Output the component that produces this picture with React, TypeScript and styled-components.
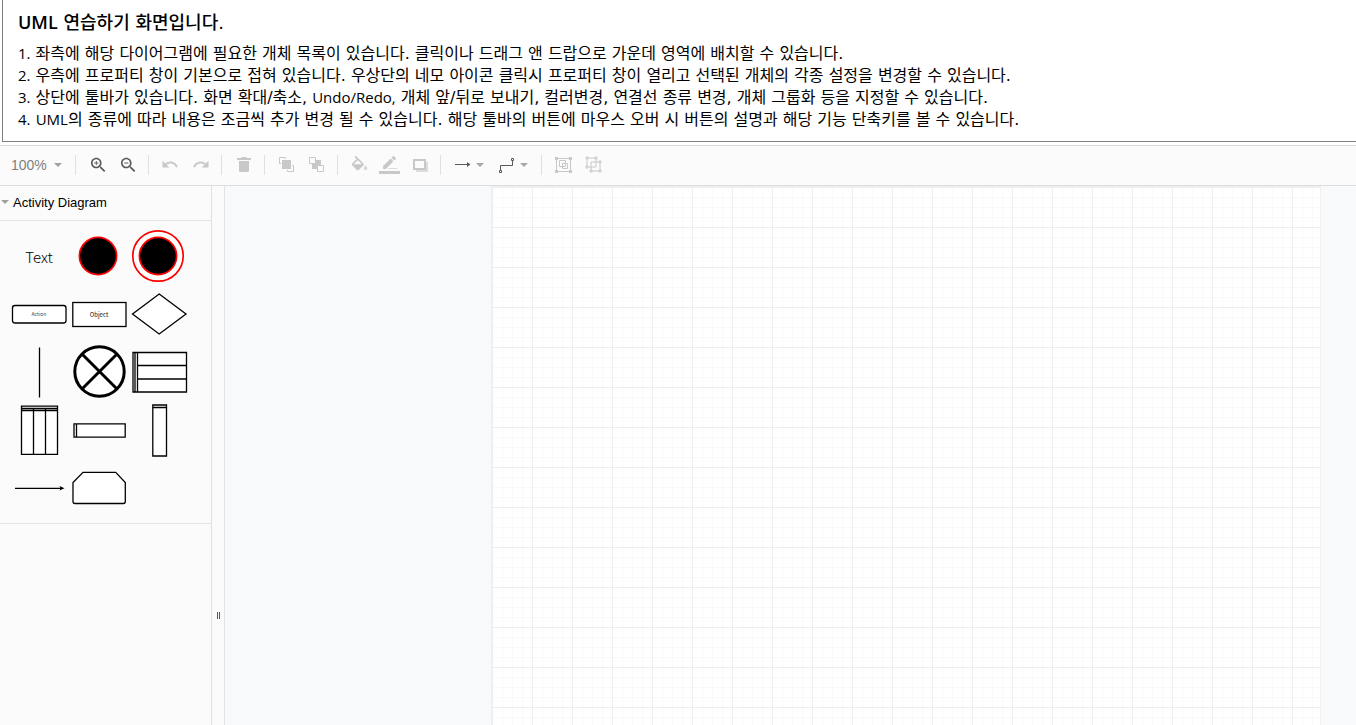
import React from "react";
import styled, { createGlobalStyle } from "styled-components";

const GlobalStyle = createGlobalStyle`
  *, *::before, *::after { box-sizing: border-box; }
  body {
    margin: 0;
    background: #ffffff;
    color: #000000;
    font-family: "DejaVu Sans", "Noto Sans CJK KR", sans-serif;
  }
`;

const Screen = styled.div`
  display: flex;
  flex-direction: column;
  min-height: 100vh;
`;

const Guide = styled.header`
  margin: 0 0 3px 2px;
  padding: 9px 15px 10px;
  border: solid #808080;
  border-width: 0 0 1px 1px;
`;

const GuideTitle = styled.h1`
  margin: 0 0 6px;
  font-size: 18px;
  line-height: 28px;
  font-weight: 500;
`;

const GuideLine = styled.p`
  margin: 0;
  font-size: 16px;
  line-height: 22px;
  font-weight: 400;
`;

const Latin = styled.span<{ $bold?: boolean }>`
  font-family: "Open Sans", sans-serif;
  font-size: ${(p) => (p.$bold ? 18 : 15)}px;
  line-height: 1;
  font-weight: ${(p) => (p.$bold ? 600 : 400)};
`;

const Toolbar = styled.div`
  display: flex;
  align-items: center;
  height: 41px;
  padding-bottom: 1px;
  background: #fbfbfb;
  border: solid #dadce0;
  border-width: 1px 0;
  font-family: "Liberation Sans", Arial, sans-serif;
`;

const ToolGroup = styled.div`
  display: flex;
  align-items: center;
  height: 20px;
  padding: 0 5px 0 7px;
  border-left: 1px solid #e0e0e0;
`;

const ToolButton = styled.button<{ $wide?: boolean; $active?: boolean }>`
  width: ${(p) => (p.$wide ? 44 : 30)}px;
  height: 30px;
  padding: 0;
  border: 0;
  background: none;
  color: ${(p) => (p.$active ? "#5a5a5a" : "#c8c8c8")};

  svg {
    display: block;
  }
`;

const ZoomButton = styled.button`
  display: flex;
  align-items: center;
  gap: 7px;
  width: 75px;
  height: 30px;
  padding: 0 0 0 11px;
  border: 0;
  background: none;
  color: #808080;
  font-family: inherit;
  font-size: 14px;
`;

const Workspace = styled.div`
  display: flex;
  flex: 1;
`;

const Sidebar = styled.aside`
  width: 212px;
  background: #fbfbfb;
  border-right: 1px solid #e0e0e0;
`;

const SectionTitle = styled.button`
  display: flex;
  align-items: center;
  gap: 4px;
  width: 100%;
  height: 35px;
  padding: 0 0 2px 1px;
  border: 0;
  border-bottom: 1px solid #e5e5e5;
  background: none;
  color: #000000;
  font-family: "Liberation Sans", Arial, sans-serif;
  font-size: 13px;
`;

const Palette = styled.div`
  display: grid;
  grid-template-columns: repeat(3, 60px);
  grid-auto-rows: 58px;
  padding: 7px 9px 5px;
  border-bottom: 1px solid #e5e5e5;
`;

const PaletteItem = styled.button`
  padding: 0 0 2px;
  border: 0;
  background: none;
  color: #000000;
  font-family: "Noto Sans CJK KR", sans-serif;
  font-size: 15px;
  font-weight: 300;

  svg {
    display: block;
    margin-bottom: -2px;
    font-weight: 400;
  }
`;

const Splitter = styled.div`
  display: flex;
  flex-direction: column;
  align-items: center;
  width: 13px;
  background: #fbfbfb;
  border-right: 1px solid #e0e3e6;

  &::before {
    content: "";
    flex: 4;
  }

  &::after {
    content: "";
    flex: 1;
  }
`;

const SplitterGrip = styled.span`
  width: 3px;
  height: 7px;
  border: solid #555555;
  border-width: 0 1px;
`;

const CanvasArea = styled.main`
  display: flex;
  flex: 1;
  justify-content: flex-end;
  padding-right: 35px;
  background: #f8f9fb;
`;

const Sheet = styled.div`
  width: 830px;
  border: solid #f0f0f0;
  border-width: 1px 1px 0;
  background-color: #ffffff;
  background-image:
    linear-gradient(to right, #eeeeee 1px, transparent 1px),
    linear-gradient(to bottom, #eeeeee 1px, transparent 1px),
    linear-gradient(to right, #f9f9f9 1px, transparent 1px),
    linear-gradient(to bottom, #f9f9f9 1px, transparent 1px);
  background-size: 40px 40px, 40px 40px, 10px 10px, 10px 10px;
`;

const guideLines: React.ReactNode[] = [
  <><Latin>1.</Latin> 좌측에 해당 다이어그램에 필요한 개체 목록이 있습니다. 클릭이나 드래그 앤 드랍으로 가운데 영역에 배치할 수 있습니다.</>,
  <><Latin>2.</Latin> 우측에 프로퍼티 창이 기본으로 접혀 있습니다. 우상단의 네모 아이콘 클릭시 프로퍼티 창이 열리고 선택된 개체의 각종 설정을 변경할 수 있습니다.</>,
  <><Latin>3.</Latin> 상단에 툴바가 있습니다. 화면 확대/축소, <Latin>Undo/Redo,</Latin> 개체 앞/뒤로 보내기, 컬러변경, 연결선 종류 변경, 개체 그룹화 등을 지정할 수 있습니다.</>,
  <><Latin>4.</Latin> <Latin>UML</Latin>의 종류에 따라 내용은 조금씩 추가 변경 될 수 있습니다. 해당 툴바의 버튼에 마우스 오버 시 버튼의 설명과 해당 기능 단축키를 볼 수 있습니다.</>,
];

type Tool = { label: string; art: React.ReactNode; active?: boolean; wide?: boolean };

const lens =
  "M15.5 14h-.79l-.28-.27C15.41 12.59 16 11.11 16 9.5 16 5.91 13.09 3 9.5 3S3 5.91 3 9.5 5.91 16 9.5 16c1.61 0 3.09-.59 4.23-1.57l.27.28v.79l5 4.99L20.49 19l-4.99-5zm-6 0C7.01 14 5 11.99 5 9.5S7.01 5 9.5 5 14 7.01 14 9.5 11.99 14 9.5 14z";
const curl =
  "M12.5 8c-2.65 0-5.05.99-6.9 2.6L2 7v9h9l-3.62-3.62c1.39-1.16 3.16-1.88 5.12-1.88 3.54 0 6.55 2.31 7.6 5.5l2.37-.78C21.08 11.03 17.15 8 12.5 8z";

const dropCaret = <path d="M28 13h8l-4 4z" fill="#a8a8a8" />;

const toolGroups: Tool[][] = [
  [
    {
      label: "Zoom In",
      active: true,
      art: <path transform="translate(5.5 5.2) scale(.82)" d={lens + "M12 10h-2v2H9v-2H7V9h2V7h1v2h2v1z"} />,
    },
    {
      label: "Zoom Out",
      active: true,
      art: <path transform="translate(5.5 5.2) scale(.82)" d={lens + "M7 9h5v1H7z"} />,
    },
  ],
  [
    { label: "Undo", art: <path transform="translate(5 5.5) scale(.75)" d={curl} /> },
    { label: "Redo", art: <path transform="translate(24 5.5) scale(-.75 .75)" d={curl} /> },
  ],
  [{ label: "Delete", art: <path d="M8 8h4l1-1h4l1 1h4v2H8zM10 11h10v9.500q0 1.500-1.500 1.500h-7q-1.500 0-1.500-1.500z" /> }],
  [
    {
      label: "To Front",
      art: (
        <>
          <path d="M10 10h9v9h-9z" />
          <path d="M13.500 9V7.500h-6v6H9M15.500 20v1.500h6v-6H20" fill="none" stroke="currentColor" />
        </>
      ),
    },
    {
      label: "To Back",
      art: (
        <>
          <path d="M10 10h9v9h-9z" />
          <path d="M7.500 7.500h6v6h-6zM15.500 15.500h6v6h-6z" fill="#fbfbfb" stroke="currentColor" />
        </>
      ),
    },
  ],
  [
    {
      label: "Fill Color",
      art: (
        <g transform="translate(4.200 5.700) scale(.86)">
          <path d="M16.560 8.940L7.620 0 6.210 1.410l2.380 2.380-5.150 5.150c-.59.59-.59 1.540 0 2.120l5.500 5.500c.29.29.68.44 1.060.44s.77-.15 1.060-.44l5.500-5.500c.59-.58.59-1.530 0-2.120zM5.210 10L10 5.210 14.790 10H5.210z" />
          <path d="M19 11.500s-2 2.170-2 3.500c0 1.100.9 2 2 2s2-.9 2-2c0-1.330-2-3.500-2-3.500z" opacity=".7" />
        </g>
      ),
    },
    {
      label: "Line Color",
      art: (
        <>
          <path
            transform="translate(5 6) scale(.76)"
            d="M17.750 7L14 3.250l-10 10V17h3.750l10-10zm2.960-2.960a1 1 0 000-1.410L18.370.29a1 1 0 00-1.410 0L15 2.250 18.750 6l1.960-1.960z"
          />
          <path d="M14 18h8v1h-9z" opacity=".6" />
          <path d="M4 21h21v3H4z" />
        </>
      ),
    },
    {
      label: "Shadow",
      art: (
        <>
          <path d="M11 12h12v10H11z" opacity=".6" />
          <path d="M9 10h11v9H9z" fill="#fbfbfb" stroke="currentColor" strokeWidth="2" />
        </>
      ),
    },
  ],
  [
    {
      label: "Connection",
      active: true,
      wide: true,
      art: (
        <>
          <path d="M7 14h12v-2l3.500 2.500L19 17v-2H7z" />
          {dropCaret}
        </>
      ),
    },
    {
      label: "Waypoints",
      active: true,
      wide: true,
      art: (
        <>
          <path
            d="M7.500 20.500h2v2h-2zM19.500 8.500h2v2h-2zM8.500 20v-4.500h12V11"
            fill="none"
            stroke="currentColor"
          />
          {dropCaret}
        </>
      ),
    },
  ],
  [
    {
      label: "Group",
      art: (
        <>
          <path
            d="M7.500 8.500h14v13h-14zM10.500 10.500h6v6h-6zM13.500 13.500h5v5h-5z"
            fill="none"
            stroke="currentColor"
          />
          <path d="M6 7h3v3H6zM20 7h3v3h-3zM6 20h3v3H6zM20 20h3v3h-3z" />
        </>
      ),
    },
    {
      label: "Ungroup",
      art: (
        <>
          <path d="M8 8h9v9H8zM12 12h9v9h-9z" fill="none" stroke="currentColor" />
          <path
            d="M7 7h2v2H7zM16 7h2v2h-2zM7 16h2v2H7zM20 11h2v2h-2zM11 20h2v2h-2zM20 20h2v2h-2z"
            fill="#fbfbfb"
            stroke="currentColor"
          />
        </>
      ),
    },
  ],
];

const shapes: { label: string; art: React.ReactNode }[] = [
  { label: "Initial", art: <circle cx="29" cy="28" r="18.6" fill="#000" stroke="#f00" strokeWidth="1.7" /> },
  {
    label: "Final",
    art: (
      <g stroke="#f00" strokeWidth="1.7">
        <circle cx="29" cy="28" r="25.200" />
        <circle cx="29" cy="28" r="18.600" fill="#000" />
      </g>
    ),
  },
  {
    label: "Action",
    art: (
      <>
        <rect x="3.500" y="19.500" width="53.500" height="17.500" rx="2.500" />
        <text x="30" y="30" fontSize="5" textAnchor="middle" fill="#444" stroke="none">Action</text>
      </>
    ),
  },
  {
    label: "Object",
    art: (
      <>
        <rect x="3.800" y="16.500" width="53.200" height="24" />
        <text x="30" y="31" fontSize="6" textAnchor="middle" fill="#111" stroke="none">Object</text>
      </>
    ),
  },
  { label: "Decision", art: <path d="M30.200 8L57 28 30.200 48 3.500 28z" /> },
  { label: "Bar", art: <path d="M30.500 3.500v50" /> },
  {
    label: "Flow final",
    art: (
      <g strokeWidth="3">
        <circle cx="30.500" cy="27.500" r="24.700" />
        <path d="M13 10l35 35M48 10L13 45" />
      </g>
    ),
  },
  {
    label: "Horizontal swimlanes",
    art: <path d="M4 8.500h53.500v39.500H4zM6 8.500v39.500M8.500 8.500v39.500M8.500 21.500h49M8.500 35h49" />,
  },
  {
    label: "Vertical swimlanes",
    art: <path d="M12.500 4.200h36v48.200h-36zM12.500 6.500h36M12.500 8.500h36M24.500 6.500v46M36.500 6.500v46" />,
  },
  { label: "Horizontal partition", art: <path d="M5 21.800h51.200v13.400H5zM7.500 21.800v13.400" /> },
  { label: "Vertical partition", art: <path d="M23.800 3h13.700v51H23.800zM23.800 5.500h13.700" /> },
  {
    label: "Flow",
    art: (
      <>
        <path d="M6 28.300h46" />
        <path d="M50.500 26l5 2.300-5 2.300 1-2.300z" fill="#000" stroke="none" />
      </>
    ),
  },
  {
    label: "Loop",
    art: <path d="M14 12.300h32.700L56.300 22.500v19q0 2-2 2H6q-2 0-2-2v-19z" />,
  },
];

const Caret = () => (
  <svg width="8" height="4" viewBox="0 0 8 4" aria-hidden="true">
    <path d="M0 0h8L4 4z" fill="#a0a0a0" />
  </svg>
);

export default function App() {
  return (
    <Screen>
      <GlobalStyle />
      <Guide>
        <GuideTitle>
          <Latin $bold>UML</Latin> 연습하기 화면입니다.
        </GuideTitle>
        {guideLines.map((line, index) => (
          <GuideLine key={index}>{line}</GuideLine>
        ))}
      </Guide>

      <Toolbar role="toolbar">
        <ZoomButton>
          100%
          <Caret />
        </ZoomButton>
        {toolGroups.map((group) => (
          <ToolGroup key={group[0].label}>
            {group.map((tool) => (
              <ToolButton key={tool.label} aria-label={tool.label} $wide={tool.wide} $active={tool.active}>
                <svg width={tool.wide ? 44 : 30} height="30" fill="currentColor">
                  {tool.art}
                </svg>
              </ToolButton>
            ))}
          </ToolGroup>
        ))}
      </Toolbar>

      <Workspace>
        <Sidebar>
          <SectionTitle>
            <Caret />
            Activity Diagram
          </SectionTitle>
          <Palette>
            <PaletteItem>Text</PaletteItem>
            {shapes.map((shape) => (
              <PaletteItem key={shape.label} aria-label={shape.label}>
                <svg width="60" height="58" fill="#fff" stroke="#000" strokeWidth="1.300">
                  {shape.art}
                </svg>
              </PaletteItem>
            ))}
          </Palette>
        </Sidebar>
        <Splitter>
          <SplitterGrip />
        </Splitter>
        <CanvasArea>
          <Sheet />
        </CanvasArea>
      </Workspace>
    </Screen>
  );
}
